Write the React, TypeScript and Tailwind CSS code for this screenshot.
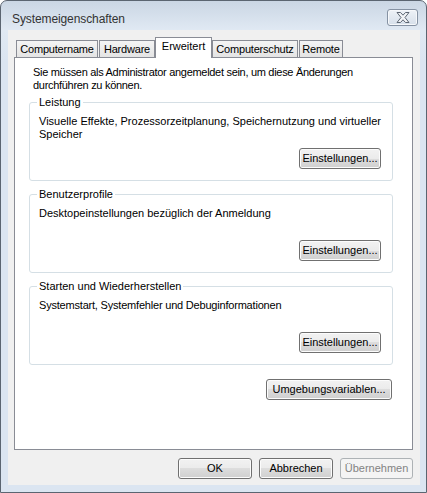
import type { ReactNode } from "react";

const btnBase =
  "h-[21px] rounded-[3px] border text-[11px] leading-[13px] flex items-center justify-center";
const btnNormal =
  "border-[#707070] text-black bg-[linear-gradient(to_bottom,#f2f2f2_0%,#ebebeb_50%,#dddddd_50%,#cfcfcf_100%)] shadow-[inset_0_0_0_1px_#fcfcfc]";
const btnDisabled = "border-[#adb2b5] text-[#838383] bg-[#f4f4f4]";

function Button({
  children,
  className = "",
  disabled = false,
}: {
  children: ReactNode;
  className?: string;
  disabled?: boolean;
}) {
  return (
    <button
      type="button"
      className={`${btnBase} ${disabled ? btnDisabled : btnNormal} ${className}`}
    >
      {children}
    </button>
  );
}

function Tab({ label, width, ml = "" }: { label: string; width: string; ml?: string }) {
  return (
    <div
      className={`${width} ${ml} flex h-[17px] items-center justify-center border border-b-0 border-[#898c95] bg-[linear-gradient(to_bottom,#f4f4f4,#e4e4e4)] text-[11px] leading-[13px] tracking-[-0.2px] text-black`}
    >
      {label}
    </div>
  );
}

function Group({
  title,
  children,
  className = "",
  textClass = "",
}: {
  title: string;
  children: ReactNode;
  className?: string;
  textClass?: string;
}) {
  return (
    <fieldset
      className={`w-[364px] rounded-[3px] border border-[#d5dfe5] px-[7px] ${className}`}
    >
      <legend className="px-[2px] text-[11px] leading-[13px] text-black">{title}</legend>
      <div className="flex h-[71px] flex-col">
        <div className={`pl-[2px] pt-[6px] text-[11px] leading-[13px] text-black ${textClass}`}>
          {children}
        </div>
        <Button className="mb-[11px] mr-[4px] mt-auto w-[82px] self-end">Einstellungen...</Button>
      </div>
    </fieldset>
  );
}

export default function App() {
  return (
    <div className="h-[493px] w-[427px] bg-white font-['Liberation_Sans',Arial,sans-serif]">
      <div className="flex h-[493px] w-[427px] flex-col rounded-t-[7px] border border-[#5b6571] bg-[linear-gradient(to_bottom,#cad6e4_0px,#e0e9f3_29px,#dbe5f1_60px,#dbe5f1_100%)]">
        {/* title bar */}
        <div className="flex h-[29px] items-start justify-between">
          <span className="pl-[11px] pt-[11px] text-[12px] leading-[15px] tracking-[-0.1px] text-[#333]">
            Systemeigenschaften
          </span>
          <div className="mr-[8px] mt-[8px] flex h-[17px] w-[31px] items-center justify-center rounded-[3px] border border-[#8592a3] bg-[linear-gradient(to_bottom,#eef2f7,#d6dfea)] shadow-[inset_0_0_0_1px_#f6f8fb]">
            <svg width="14" height="11" viewBox="0 0 14 11">
              <polygon
                points="1,0.5 4.5,0.5 7,3.2 9.5,0.5 13,0.5 9,5.5 13,10.5 9.5,10.5 7,7.8 4.5,10.5 1,10.5 5,5.5"
                fill="#f2f4f7"
                stroke="#5d6673"
                strokeWidth="1"
                strokeLinejoin="round"
              />
            </svg>
          </div>
        </div>

        {/* client */}
        <div className="ml-[7px] flex h-[455px] w-[412px] flex-col bg-[#f0f0f0] pt-[7px]">
          {/* tabs */}
          <div className="ml-[8px] flex h-[20px] items-end">
            <Tab label="Computername" width="w-[82px]" />
            <Tab label="Hardware" width="w-[56px]" ml="ml-[1px]" />
            <div className="relative z-10 -mb-[1px] flex h-[21px] w-[57px] justify-center border border-b-0 border-[#898c95] bg-white pt-[2px] text-[11px] leading-[13px] text-black">
              Erweitert
            </div>
            <Tab label="Computerschutz" width="w-[86px]" />
            <Tab label="Remote" width="w-[44px]" ml="ml-[1px]" />
          </div>

          {/* panel */}
          <div className="ml-[6px] flex h-[393px] w-[399px] flex-col border border-[#898c95] bg-white pl-[14px]">
            <p className="mt-[8px] pl-[4px] text-[11px] leading-[13px] tracking-[-0.3px] whitespace-nowrap text-black">
              Sie müssen als Administrator angemeldet sein, um diese Änderungen
              <br />
              durchführen zu können.
            </p>

            <Group title="Leistung" className="mt-[4px]">
              Visuelle Effekte, Prozessorzeitplanung, Speichernutzung und virtueller
              <br />
              Speicher
            </Group>

            <Group title="Benutzerprofile" className="mt-[7px]">
              Desktopeinstellungen bezüglich der Anmeldung
            </Group>

            <Group title="Starten und Wiederherstellen" className="mt-[7px]" textClass="tracking-[-0.2px]">
              Systemstart, Systemfehler und Debuginformationen
            </Group>

            <div className="mt-[14px] flex w-[364px] justify-end pr-[1px]">
              <Button className="w-[126px]">Umgebungsvariablen...</Button>
            </div>
          </div>

          {/* dialog buttons */}
          <div className="mt-[8px] flex justify-end gap-[7px] pr-[7px]">
            <Button className="w-[74px]">OK</Button>
            <Button className="w-[74px]">Abbrechen</Button>
            <Button className="w-[73px]" disabled>
              Übernehmen
            </Button>
          </div>
        </div>
      </div>
    </div>
  );
}
